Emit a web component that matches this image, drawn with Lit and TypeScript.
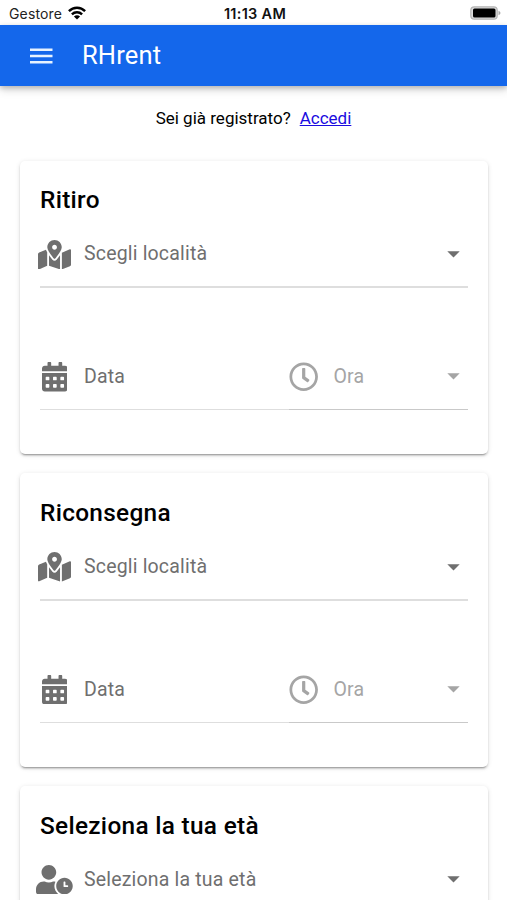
import { LitElement, html, css, svg } from "lit";
import { customElement, property } from "lit/decorators.js";

const hole = (x: number, y: number) =>
  `M${x} ${y}c0-6.6 5.4-12 12-12h40c6.6 0 12 5.4 12 12v40c0 6.6-5.4 12-12 12h-40c-6.6 0-12-5.4-12-12z`;

const icons: Record<string, { w: number; d: string }> = {
  map: {
    w: 576,
    d: "M288 0c-69.59 0-126 56.41-126 126 0 56.26 82.35 158.8 113.9 196.02 6.39 7.54 17.82 7.54 24.2 0C331.65 284.8 414 182.26 414 126 414 56.41 357.59 0 288 0zm0 168c-23.2 0-42-18.8-42-42s18.8-42 42-42 42 18.8 42 42-18.8 42-42 42zM20.12 215.95A32.006 32.006 0 0 0 0 245.66v250.32c0 11.32 11.43 19.06 21.94 14.86L160 448V214.92c-8.84-15.98-16.07-31.54-21.25-46.42L20.12 215.95zM288 359.67c-14.07 0-27.38-6.18-36.51-16.96-19.66-23.2-40.57-49.62-59.49-76.72v182l192 64V266c-18.92 27.09-39.82 53.52-59.49 76.72-9.13 10.77-22.44 16.95-36.51 16.95zm266.06-198.51L416 224v288l139.88-55.95A31.996 31.996 0 0 0 576 426.34V176.02c0-11.32-11.43-19.06-21.94-14.86z",
  },
  calendar: {
    w: 448,
    d:
      "M0 464c0 26.5 21.5 48 48 48h352c26.5 0 48-21.5 48-48V192H0zM400 64h-48V16c0-8.8-7.2-16-16-16h-32c-8.8 0-16 7.2-16 16v48H160V16c0-8.8-7.2-16-16-16h-32c-8.8 0-16 7.2-16 16v48H48C21.5 64 0 85.5 0 112v48h448v-48c0-26.5-21.5-48-48-48z" +
      [64, 192, 320].map((x) => hole(x, 268) + hole(x, 396)).join(""),
  },
  clock: {
    w: 512,
    d: "M256 8C119 8 8 119 8 256s111 248 248 248 248-111 248-248S393 8 256 8zm0 448c-110.5 0-200-89.5-200-200S145.5 56 256 56s200 89.5 200 200-89.5 200-200 200zm61.8-104.4l-84.9-61.7c-3.1-2.3-4.9-5.9-4.9-9.7V116c0-6.6 5.4-12 12-12h32c6.6 0 12 5.4 12 12v141.7l66.8 48.6c5.4 3.9 6.5 11.4 2.6 16.8L334.6 349c-3.9 5.3-11.4 6.5-16.8 2.6z",
  },
  user: {
    w: 640,
    d: "M496 224c-79.6 0-144 64.4-144 144s64.4 144 144 144 144-64.4 144-144-64.4-144-144-144zm64 150.3c0 5.3-4.4 9.7-9.7 9.7h-60.6c-5.3 0-9.7-4.4-9.7-9.7v-76.6c0-5.3 4.4-9.7 9.7-9.7h12.6c5.3 0 9.7 4.4 9.7 9.7V352h38.3c5.3 0 9.7 4.4 9.7 9.7zM320 368c0-27.8 6.7-54.1 18.2-77.5-8-1.5-16.2-2.5-24.6-2.5h-16.7c-22.2 10.2-46.9 16-72.9 16s-50.6-5.8-72.9-16h-16.7C60.2 288 0 348.2 0 422.4V464c0 26.5 21.5 48 48 48h347.1c-45.3-31.9-75.1-84.5-75.1-144zm-96-112c70.7 0 128-57.3 128-128S294.7 0 224 0 96 57.3 96 128s57.3 128 128 128z",
  },
};

@customElement("form-field")
export class FormField extends LitElement {
  @property() icon = "map";
  @property() label = "";
  @property({ type: Boolean }) select = false;

  static styles = css`
    :host {
      display: flex;
      align-items: center;
      box-sizing: border-box;
      height: 69px;
      padding: 3px 8px 0 0;
      border-bottom: 2px solid #dedede;
      color: #6f6f6f;
    }
    :host([thin]) {
      border-bottom-width: 1.5px;
    }
    :host([disabled]) {
      color: #a5a5a5;
      border-bottom-color: #c9c9c9;
    }
    .icon {
      display: flex;
      justify-content: center;
      width: 29px;
      flex: none;
    }
    .icon svg {
      height: 29.4px;
      flex: none;
    }
    .label {
      flex: 1;
      margin-left: 15px;
      font-size: 19.5px;
      line-height: 24px;
      letter-spacing: 0.18px;
      white-space: nowrap;
    }
    .arrow {
      width: 13px;
      height: 7px;
    }
  `;

  render() {
    const i = icons[this.icon];
    return html`
      <span class="icon">
        <svg viewBox="0 0 ${i.w} 512" width=${(i.w * 29.4) / 512}>
          ${svg`<path fill="currentColor" fill-rule="evenodd" d=${i.d}></path>`}
        </svg>
      </span>
      <span class="label">${this.label}</span>
      ${this.select
        ? html`<svg class="arrow" viewBox="0 0 13 7"><path fill="currentColor" d="M0.3 0.3h12.4l-6.2 6.3z" /></svg>`
        : null}
    `;
  }
}

@customElement("app-root")
export class AppRoot extends LitElement {
  static styles = css`
    :host {
      display: flex;
      flex-direction: column;
      height: 900px;
      overflow: hidden;
      background: #fff;
      color: #000;
      font-family: Roboto, sans-serif;
    }
    .status {
      display: grid;
      grid-template-columns: 1fr auto 1fr;
      align-items: center;
      height: 25.4px;
      flex: none;
      box-sizing: border-box;
      padding: 1px 6px 0 9px;
      font-family: Inter, sans-serif;
      font-size: 14px;
    }
    .carrier {
      display: flex;
      align-items: center;
      gap: 6px;
      letter-spacing: 0.15px;
      color: #222;
    }
    .time {
      font-size: 14.5px;
      letter-spacing: 0.3px;
      font-weight: 600;
      color: #111;
    }
    .battery {
      justify-self: end;
    }
    .bar {
      position: relative;
      display: flex;
      align-items: center;
      gap: 29.5px;
      height: 61px;
      flex: none;
      box-sizing: border-box;
      padding-left: 30px;
      background: #1467eb;
      color: #fff;
      box-shadow: 0 2px 5px rgba(0, 0, 0, 0.2), 0 4px 9px rgba(0, 0, 0, 0.14);
    }
    .title {
      margin-top: -1px;
      font-size: 25.5px;
      line-height: 30px;
      letter-spacing: 0.15px;
    }
    .login {
      display: flex;
      justify-content: center;
      gap: 9px;
      margin-top: 22px;
      font-size: 17px;
      line-height: 20px;
      flex: none;
    }
    .login a {
      color: #1a0be0;
      text-decoration: underline;
    }
    .cards {
      display: flex;
      flex-direction: column;
      gap: 19.5px;
      margin: 32.4px 19.5px 0 20.2px;
    }
    .card {
      box-sizing: border-box;
      height: 293.2px;
      flex: none;
      padding: 23.6px 19.5px 0 19.8px;
      border-radius: 5px;
      background: #fff;
      box-shadow: 0 3px 1px -2px rgba(0, 0, 0, 0.2), 0 2px 2px rgba(0, 0, 0, 0.14),
        0 1px 5px rgba(0, 0, 0, 0.12);
    }
    .heading {
      margin: 0 0 4px;
      font-size: 24.4px;
      line-height: 31px;
      font-weight: 500;
      letter-spacing: 0.3px;
      white-space: nowrap;
    }
    .row {
      display: grid;
      grid-template-columns: 249.5px 1fr;
      margin-top: 53px;
    }
  `;

  private booking(title: string) {
    return html`<section class="card">
      <h2 class="heading">${title}</h2>
      <form-field icon="map" label="Scegli località" select></form-field>
      <div class="row">
        <form-field icon="calendar" label="Data" thin></form-field>
        <form-field icon="clock" label="Ora" select thin disabled></form-field>
      </div>
    </section>`;
  }

  render() {
    return html`
      <div class="status">
        <span class="carrier">
          Gestore
          <svg width="18" height="14" viewBox="0 0 18 14" fill="none" stroke="#000" stroke-width="2.4">
            <path d="M0.9 5.2C5.4 0.6 12.6 0.6 17.1 5.2" />
            <path d="M3.9 8.3C6.8 5.5 11.2 5.5 14.1 8.3" />
            <path fill="#000" stroke="none" d="M9 13.5L5.9 10.4Q9 8 12.1 10.4z" />
          </svg>
        </span>
        <span class="time">11:13 AM</span>
        <svg class="battery" width="31" height="14" viewBox="0 0 31 14">
          <rect x="0.8" y="0.8" width="26.4" height="12.4" rx="3.5" fill="#ddd" stroke="#b5b5b5" stroke-width="1.2" />
          <rect x="3" y="2.5" width="22.5" height="9" rx="1.5" />
          <path d="M28.5 4.8Q30.5 5.5 30.5 7T28.5 9.2z" fill="#aaa" />
        </svg>
      </div>
      <header class="bar">
        <svg width="22.5" height="16" viewBox="0 0 22.5 16" fill="#e6f2ff">
          <path d="M0 0.5h22.5v2.4H0zM0 6.8h22.5v2.4H0zM0 13.1h22.5v2.4H0z" />
        </svg>
        <span class="title">RHrent</span>
      </header>
      <div class="login"><span>Sei già registrato?</span><a href="#">Accedi</a></div>
      <main class="cards">
        ${this.booking("Ritiro")} ${this.booking("Riconsegna")}
        <section class="card">
          <h2 class="heading">Seleziona la tua età</h2>
          <form-field icon="user" label="Seleziona la tua età" select></form-field>
        </section>
      </main>
    `;
  }
}
